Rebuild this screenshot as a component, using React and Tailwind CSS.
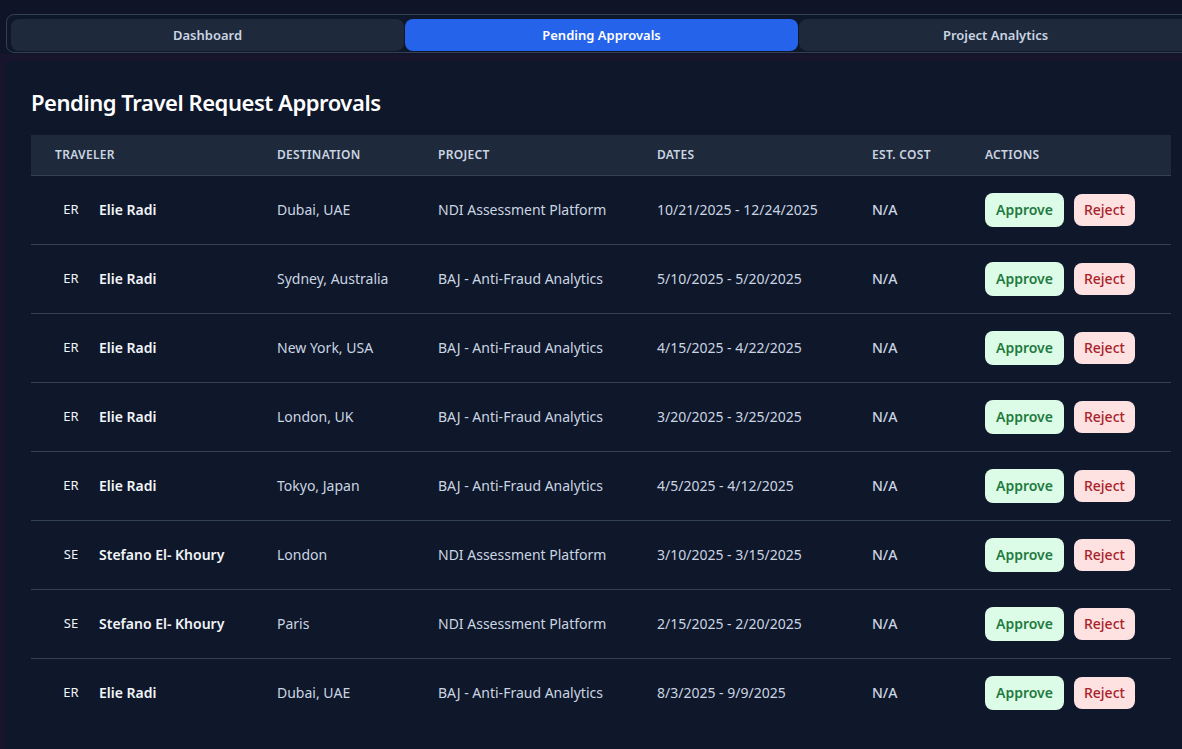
import React, { useState } from 'react';

const requests = [
    { initials: 'ER', name: 'Elie Radi', destination: 'Dubai, UAE', project: 'NDI Assessment Platform', dates: '10/21/2025 - 12/24/2025' },
    { initials: 'ER', name: 'Elie Radi', destination: 'Sydney, Australia', project: 'BAJ - Anti-Fraud Analytics', dates: '5/10/2025 - 5/20/2025' },
    { initials: 'ER', name: 'Elie Radi', destination: 'New York, USA', project: 'BAJ - Anti-Fraud Analytics', dates: '4/15/2025 - 4/22/2025' },
    { initials: 'ER', name: 'Elie Radi', destination: 'London, UK', project: 'BAJ - Anti-Fraud Analytics', dates: '3/20/2025 - 3/25/2025' },
    { initials: 'ER', name: 'Elie Radi', destination: 'Tokyo, Japan', project: 'BAJ - Anti-Fraud Analytics', dates: '4/5/2025 - 4/12/2025' },
    { initials: 'SE', name: 'Stefano El- Khoury', destination: 'London', project: 'NDI Assessment Platform', dates: '3/10/2025 - 3/15/2025' },
    { initials: 'SE', name: 'Stefano El- Khoury', destination: 'Paris', project: 'NDI Assessment Platform', dates: '2/15/2025 - 2/20/2025' },
    { initials: 'ER', name: 'Elie Radi', destination: 'Dubai, UAE', project: 'BAJ - Anti-Fraud Analytics', dates: '8/3/2025 - 9/9/2025' },
];

const tabs = ['Dashboard', 'Pending Approvals', 'Project Analytics'];

const App = () => {
    const [active, setActive] = useState('Pending Approvals');

    return (
        <div className="min-h-screen w-full overflow-hidden bg-[#0f1526] font-['Noto_Sans',sans-serif] text-slate-300">
            {/* Tabs */}
            <div className="pt-[14px] pl-[6px]">
                <div className="flex w-[1200px] gap-[1px] rounded-lg border border-[#334155] bg-[#0f172a] pt-1 pb-px pl-1">
                    {tabs.map((t) => (
                        <button
                            key={t}
                            onClick={() => setActive(t)}
                            className={`h-8 w-[393px] shrink-0 rounded-lg pt-px text-[13px] font-semibold ${
                                active === t ? 'bg-[#2563eb] text-white' : 'bg-[#1e293b] text-slate-300'
                            }`}
                        >
                            {t}
                        </button>
                    ))}
                </div>
            </div>

            {/* Main panel */}
            <div className="mt-px bg-[#16152d] pt-2 pl-[6px]">
                <div className="min-h-[700px] w-[1200px] bg-[#0f172a] pt-6 pl-[25px]">
                    <h1 className="mb-[17px] text-[22px] leading-8 font-semibold tracking-[-0.45px] text-white">Pending Travel Request Approvals</h1>

                    <table className="w-[1140px] table-fixed border-collapse text-left">
                        <colgroup>
                            <col className="w-[222px]" />
                            <col className="w-[161px]" />
                            <col className="w-[219px]" />
                            <col className="w-[215px]" />
                            <col className="w-[113px]" />
                            <col className="w-[210px]" />
                        </colgroup>
                        <thead>
                            <tr className="h-10 bg-[#1e293b] text-[12px] tracking-wide text-slate-300 uppercase">
                                <th className="px-6 pt-px font-semibold">Traveler</th>
                                <th className="px-6 pt-px font-semibold">Destination</th>
                                <th className="px-6 pt-px font-semibold">Project</th>
                                <th className="px-6 pt-px font-semibold">Dates</th>
                                <th className="px-6 pt-px font-semibold">Est. Cost</th>
                                <th className="px-6 pt-px font-semibold">Actions</th>
                            </tr>
                        </thead>
                        <tbody className="text-[14px] text-slate-300">
                            {requests.map((r, i) => (
                                <tr key={i} className="h-[69px] border-t border-[#334155]">
                                    <td className="px-6">
                                        <div className="flex items-center gap-3">
                                            <span className="flex h-8 w-8 items-center justify-center text-[13px] text-slate-100">{r.initials}</span>
                                            <span className="font-semibold text-slate-100">{r.name}</span>
                                        </div>
                                    </td>
                                    <td className="px-6">{r.destination}</td>
                                    <td className="px-6">{r.project}</td>
                                    <td className="px-6">{r.dates}</td>
                                    <td className="px-6 font-medium">N/A</td>
                                    <td className="px-6">
                                        <div className="flex items-center gap-[10px]">
                                            <button className="h-[34px] rounded-lg bg-[#dcfce7] px-[11px] font-semibold text-[#1f7a3f]">Approve</button>
                                            <button className="h-8 rounded-lg bg-[#fee2e2] px-[10px] font-medium text-[#a9222a]">Reject</button>
                                        </div>
                                    </td>
                                </tr>
                            ))}
                        </tbody>
                    </table>
                </div>
            </div>
        </div>
    );
};

export default App;
